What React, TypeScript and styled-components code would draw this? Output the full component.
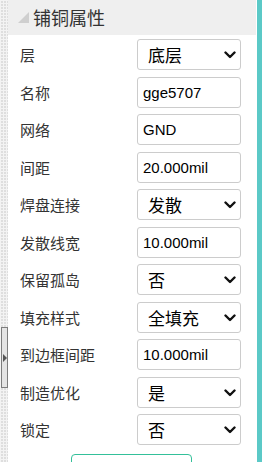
import React from "react";
import styled, { createGlobalStyle } from "styled-components";

const GlobalStyle = createGlobalStyle`
  html, body { margin: 0; padding: 0; background: #fff; }
  body { width: 262px; height: 462px; overflow: hidden; font-family: "Noto Sans CJK SC", "Liberation Sans", sans-serif; }
  * { box-sizing: border-box; }
`;

const Page = styled.div`
  display: flex;
  width: 262px;
  height: 462px;
  overflow: hidden;
`;

const SideStrip = styled.div`
  width: 8px;
  flex: none;
  display: flex;
  flex-direction: column;
  padding-top: 327px;
  background-color: #dedede;
  background-image: linear-gradient(to right, #f3f3f3 1px, transparent 1px),
    linear-gradient(to bottom, #f3f3f3 1px, transparent 1px);
  background-size: 3px 3px;
`;

const Handle = styled.div`
  margin-left: 1px;
  width: 7px;
  height: 61px;
  border: 1px solid #7d7d7d;
  background: #e4e4e4;
  display: flex;
  align-items: center;
  justify-content: center;
`;

const Panel = styled.div`
  flex: 1;
  display: flex;
  flex-direction: column;
  padding-right: 1px;
  background: #fff;
`;

const Header = styled.div`
  height: 35px;
  flex: none;
  background: #efefef;
  display: flex;
  align-items: center;
  padding-left: 10px;
  gap: 4px;
`;

const Title = styled.span`
  font-size: 18px;
  color: #333;
  line-height: 1;
  margin-top: -2px;
`;

const List = styled.div`
  display: flex;
  flex-direction: column;
  gap: 6.5px;
  padding-top: 4px;
`;

const Row = styled.div`
  display: grid;
  grid-template-columns: 128.5px 104px;
  align-items: center;
  height: 31px;
`;

const Label = styled.span`
  padding-left: 12px;
  font-size: 15px;
  color: #333;
  line-height: 1;
  white-space: nowrap;
`;

const TextField = styled.input`
  height: 31px;
  width: 104px;
  border: 1px solid #cccccc;
  border-radius: 3px;
  padding: 0 0 0 5.5px;
  font-family: "Liberation Sans", Arial, sans-serif;
  font-size: 15px;
  color: #000;
  background: #fff;
  outline: none;
`;

const SelectWrap = styled.div`
  position: relative;
  height: 31px;
  width: 104px;
`;

const SelectBox = styled.select`
  appearance: none;
  -webkit-appearance: none;
  height: 31px;
  width: 104px;
  border: 1px solid #cccccc;
  border-radius: 3px;
  padding: 0 0 0 10.5px;
  font-family: "Noto Sans CJK SC", sans-serif;
  font-size: 17px;
  color: #000;
  background: #fff;
  outline: none;
`;

const Chevron = styled.svg`
  position: absolute;
  right: 5px;
  top: 12px;
  pointer-events: none;
`;

const ButtonArea = styled.div`
  padding: 9px 0 0 63px;
`;

const ActionButton = styled.button`
  width: 121px;
  height: 32px;
  border: 1.5px solid #34c09a;
  border-radius: 4px;
  background: #fff;
  color: #34c09a;
  font-family: "Noto Sans CJK SC", sans-serif;
  font-size: 15px;
  padding: 0;
`;

const TealEdge = styled.div`
  width: 5px;
  flex: none;
  background: #5bc9c7;
`;

type Field =
  | { label: string; kind: "select"; value: string; options: string[] }
  | { label: string; kind: "text"; value: string };

const fields: Field[] = [
  { label: "层", kind: "select", value: "底层", options: ["顶层", "底层"] },
  { label: "名称", kind: "text", value: "gge5707" },
  { label: "网络", kind: "text", value: "GND" },
  { label: "间距", kind: "text", value: "20.000mil" },
  { label: "焊盘连接", kind: "select", value: "发散", options: ["直连", "发散"] },
  { label: "发散线宽", kind: "text", value: "10.000mil" },
  { label: "保留孤岛", kind: "select", value: "否", options: ["是", "否"] },
  { label: "填充样式", kind: "select", value: "全填充", options: ["全填充", "网格"] },
  { label: "到边框间距", kind: "text", value: "10.000mil" },
  { label: "制造优化", kind: "select", value: "是", options: ["是", "否"] },
  { label: "锁定", kind: "select", value: "否", options: ["是", "否"] },
];

function ChevronIcon() {
  return (
    <Chevron width="12" height="8" viewBox="0 0 12 8">
      <path d="M1.5 1.5 L6 6 L10.5 1.5" fill="none" stroke="#111" strokeWidth="2.4" strokeLinecap="round" strokeLinejoin="round" />
    </Chevron>
  );
}

export default function App() {
  return (
    <>
      <GlobalStyle />
      <Page>
        <SideStrip>
          <Handle>
            <svg width="4" height="8" viewBox="0 0 4 8">
              <polygon points="0,0 4,4 0,8" fill="#555" />
            </svg>
          </Handle>
        </SideStrip>
        <Panel>
          <Header>
            <svg width="11" height="11" viewBox="0 0 11 11">
              <polygon points="11,0 11,11 0,11" fill="#cfcfcf" />
            </svg>
            <Title>铺铜属性</Title>
          </Header>
          <List>
            {fields.map((f) => (
              <Row key={f.label}>
                <Label>{f.label}</Label>
                {f.kind === "select" ? (
                  <SelectWrap>
                    <SelectBox defaultValue={f.value}>
                      {f.options.map((o) => (
                        <option key={o} value={o}>
                          {o}
                        </option>
                      ))}
                    </SelectBox>
                    <ChevronIcon />
                  </SelectWrap>
                ) : (
                  <TextField defaultValue={f.value} />
                )}
              </Row>
            ))}
          </List>
          <ButtonArea>
            <ActionButton>应用</ActionButton>
          </ButtonArea>
        </Panel>
        <TealEdge />
      </Page>
    </>
  );
}
